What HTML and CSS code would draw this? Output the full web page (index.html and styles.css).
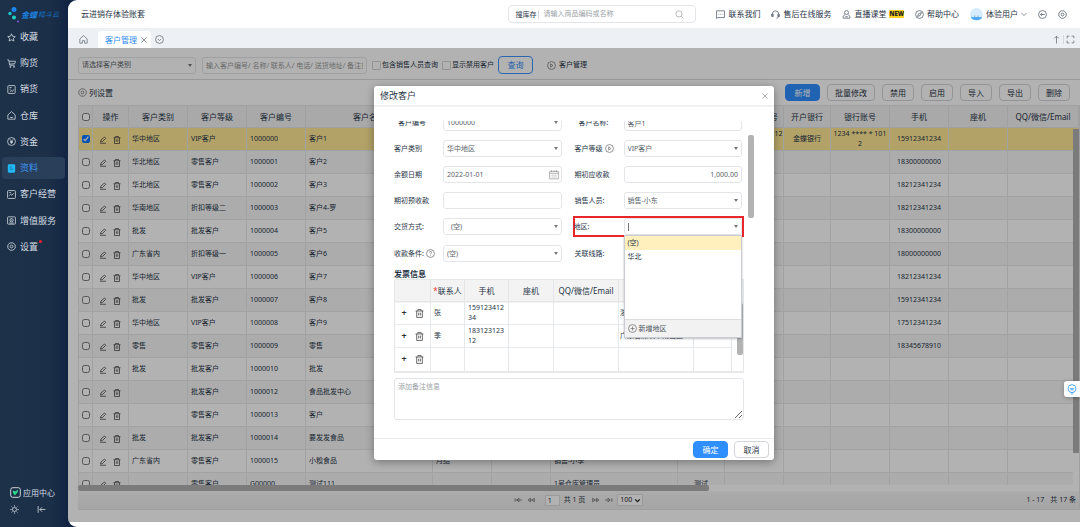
FILE: index.html
```html
<!DOCTYPE html>
<html lang="zh-CN">
<head>
<meta charset="utf-8">
<title>客户管理</title>
<link rel="stylesheet" href="styles.css">
</head>
<body>
<svg class="sprite" aria-hidden="true">
  <symbol id="i-edit" viewBox="0 0 16 16"><path d="M3 12l1-4 7-6 2.500 2.500-6.500 6.500zM2 14.500h12"/></symbol>
  <symbol id="i-trash" viewBox="0 0 16 16"><path d="M1 3.500h14M5 3V1h6v2M3 3.500V15h10V3.500M6.500 6.500v5M9.500 6.500v5"/></symbol>
  <symbol id="i-star" viewBox="0 0 16 16"><path d="M8 1.500l2 4.300 4.700.6-3.400 3.200.9 4.700L8 12l-4.200 2.300.9-4.700L1.300 6.400 6 5.800z"/></symbol>
  <symbol id="i-cart" viewBox="0 0 16 16"><path d="M.5 1.500H3l1.800 9.500h8.700M3.500 4h11.500l-1.500 4.500-9 .5"/><circle cx="6" cy="14" r="1"/><circle cx="12.500" cy="14" r="1"/></symbol>
  <symbol id="i-sale" viewBox="0 0 16 16"><rect x="1.500" y="1" width="13" height="14" rx="1.500"/><path d="M4.500 4.500H8M4.500 7.500h2M5 12l3-2.500 1.500 2L12 8"/></symbol>
  <symbol id="i-house" viewBox="0 0 16 16"><path d="M1.500 7L8 1l6.500 6v7.500h-13zM5.500 11.500h5"/></symbol>
  <symbol id="i-yen" viewBox="0 0 16 16"><circle cx="8" cy="8" r="7"/><path d="M5 4l3 3.500L11 4M8 7.500V12M5.500 8h5M5.500 10h5"/></symbol>
  <symbol id="i-book" viewBox="0 0 16 16"><rect x="1.500" y="0.500" width="13" height="15" rx="2" fill="#20b8f5" stroke="none"/><path d="M5 5.500h4M5 9h6" stroke="#1668a8"/></symbol>
  <symbol id="i-chart" viewBox="0 0 16 16"><rect x="1" y="1" width="14" height="14" rx="1.500"/><path d="M4 10l2.500-2.500L8.500 9 12 6M4 4.500h3"/></symbol>
  <symbol id="i-value" viewBox="0 0 16 16"><rect x="1" y="1.500" width="14" height="13" rx="1.500"/><circle cx="8" cy="7.500" r="3"/><path d="M4 12.500h8M6.500 7.500h3"/></symbol>
  <symbol id="i-gear" viewBox="0 0 16 16"><path d="M5.500 1.500h5L14.500 5v6l-4 3.500h-5l-4-3.500V5z"/><circle cx="8" cy="8" r="2.500"/></symbol>
  <symbol id="i-home" viewBox="0 0 16 16"><path d="M1.500 7L8 1l6.500 6v7.500H10V10H6v4.500H1.500z"/></symbol>
  <symbol id="i-down" viewBox="0 0 16 16"><circle cx="8" cy="8" r="7"/><path d="M5 7l3 3 3-3"/></symbol>
  <symbol id="i-play" viewBox="0 0 16 16"><circle cx="8" cy="8" r="7"/><path d="M6.500 5l4 3-4 3z"/></symbol>
  <symbol id="i-plus" viewBox="0 0 16 16"><circle cx="8" cy="8" r="7"/><path d="M8 4.500v7M4.500 8h7"/></symbol>
  <symbol id="i-help" viewBox="0 0 16 16"><circle cx="8" cy="8" r="7"/><path d="M6 6.200c0-2.600 4-2.600 4 0 0 1.500-2 1.500-2 3.300M8 11v1.200"/></symbol>
  <symbol id="i-chat" viewBox="0 0 16 16"><path d="M1 1.500h14v12H3.500L1 15zM4.500 7.500h1.200M7.400 7.500h1.200M10.300 7.500h1.200"/></symbol>
  <symbol id="i-headset" viewBox="0 0 16 16"><path d="M2.500 11V7a5.500 5.500 0 0 1 11 0v4c0 2.500-2 3.500-4 3.500M2.500 7.500H1v4h3v-4zM13.500 7.500H15v4h-3v-4"/></symbol>
  <symbol id="i-person" viewBox="0 0 16 16"><circle cx="8" cy="4.500" r="3.500"/><path d="M5.500 8L2 11v3.500h12V11l-3.500-3M5.500 12h5"/></symbol>
  <symbol id="i-compass" viewBox="0 0 16 16"><circle cx="8" cy="8" r="7"/><path d="M11.500 4.500l-2 5-5 2 2-5z"/></symbol>
  <symbol id="i-back" viewBox="0 0 16 16"><circle cx="8" cy="8" r="7"/><path d="M12 8H4.500M7 5.500L4.500 8 7 10.500"/></symbol>
</svg>

<div class="app">
  <aside class="side">
    <div class="logo">
      <svg class="logo-mark" viewBox="0 0 12 16"><circle cx="6" cy="2.500" r="2.500" fill="#1a86f0"/><circle cx="2" cy="6.500" r="1.700" fill="#18c5d8"/><circle cx="6" cy="10.500" r="2" fill="#1ed0c0"/><circle cx="10" cy="14.500" r="1" fill="#8a5cf0"/></svg>
      <b>金蝶</b><i>精斗云</i>
    </div>
    <nav class="menu">
      <a href="#"><svg><use href="#i-star"/></svg>收藏</a>
      <a href="#"><svg><use href="#i-cart"/></svg>购货</a>
      <a href="#"><svg><use href="#i-sale"/></svg>销货</a>
      <a href="#"><svg><use href="#i-house"/></svg>仓库</a>
      <a href="#"><svg><use href="#i-yen"/></svg>资金</a>
      <a href="#" class="on"><svg><use href="#i-book"/></svg>资料</a>
      <a href="#"><svg><use href="#i-chart"/></svg>客户经营</a>
      <a href="#"><svg><use href="#i-value"/></svg>增值服务</a>
      <a href="#"><svg><use href="#i-gear"/></svg><span class="dotted">设置</span></a>
    </nav>
    <div class="side-foot">
      <a href="#"><svg class="appic" viewBox="0 0 16 16"><rect x="1" y="1" width="14" height="14" rx="3"/><path d="M4 5l3.500 1 4.500-2-1 4-4 4.500L4.500 9z" fill="#2fd08a" stroke="none"/></svg>应用中心</a>
      <div class="side-tools">
        <button aria-label="主题"><svg viewBox="0 0 16 16"><circle cx="8" cy="8" r="3.500"/><path d="M8 .5V3M8 13v2.500M.5 8H3M13 8h2.500M2.700 2.700l1.700 1.700M11.600 11.600l1.700 1.700M2.700 13.300l1.700-1.700M11.600 4.400l1.700-1.700"/></svg></button>
        <button aria-label="收起"><svg viewBox="0 0 16 16"><path d="M2 2v12M15 8H5M9 4L5 8l4 4"/></svg></button>
      </div>
    </div>
  </aside>

  <div class="main">
    <header class="top">
      <span class="account">云进销存体验账套</span>
      <div class="search">
        <label for="q">搜库存</label>
        <input id="q" placeholder="请输入商品编码或名称">
        <svg viewBox="0 0 16 16"><circle cx="7" cy="7" r="5.500"/><path d="M11 11l4 4"/></svg>
      </div>
      <nav class="links">
        <a href="#"><svg><use href="#i-chat"/></svg>联系我们</a>
        <a href="#"><svg><use href="#i-headset"/></svg>售后在线服务</a>
        <a href="#"><svg><use href="#i-person"/></svg>直播课堂<em>NEW</em></a>
        <a href="#"><svg><use href="#i-compass"/></svg>帮助中心</a>
        <a href="#"><svg class="avatar" viewBox="0 0 24 24"><circle cx="12" cy="12" r="12" fill="#d5ecff"/><path d="M2 19l2-8c4-5 12-5 16 0l2 8c-6 4-14 4-20 0z" fill="#59b2fb"/><path d="M3 11c1-10 17-10 18 0v6H3z" fill="#d9edff"/><path d="M3 17h18l-3 4H6z" fill="#45a6fa"/><path d="M8 15h2M14 15h2" stroke="#2477c8"/></svg>体验用户<svg class="chev" viewBox="0 0 12 12"><path d="M1 4l5 5 5-5"/></svg></a>
        <a href="#" aria-label="返回"><svg><use href="#i-back"/></svg></a>
        <a href="#" aria-label="设置"><svg><use href="#i-gear"/></svg></a>
      </nav>
    </header>

    <div class="tabs">
      <button class="ic" aria-label="首页"><svg><use href="#i-home"/></svg></button>
      <div class="tab">客户管理<button class="ic" aria-label="关闭标签"><svg class="x" viewBox="0 0 12 12"><path d="M1 1l10 10M11 1L1 11"/></svg></button></div>
      <button class="ic" aria-label="更多标签"><svg class="more"><use href="#i-down"/></svg></button>
      <div class="tab-tools">
        <button class="ic" aria-label="上移"><svg viewBox="0 0 12 16"><path d="M6 15V2M2 6l4-4 4 4"/></svg></button>
        <button class="ic full" aria-label="全屏"><svg viewBox="0 0 16 16"><path d="M6 2H2v4M10 2h4v4M6 14H2v-4M10 14h4v-4"/></svg></button>
      </div>
    </div>

    <div class="content">
      <form class="filter">
        <div class="sel cat"><select aria-label="客户类别"><option>请选择客户类别</option></select></div>
        <input class="kw" aria-label="关键字" placeholder="输入客户编号/ 名称/ 联系人/ 电话/ 送货地址/ 备注查询">
        <label><input type="checkbox">包含销售人员查询</label>
        <label><input type="checkbox">显示禁用客户</label>
        <button type="button" class="query">查询</button>
        <a href="#"><svg><use href="#i-play"/></svg>客户管理</a>
      </form>
      <div class="actions">
        <button class="colset"><svg><use href="#i-gear"/></svg>列设置</button>
        <div class="btns">
          <button class="primary">新增</button><button>批量修改</button><button>禁用</button><button>启用</button><button>导入</button><button>导出</button><button>删除</button>
        </div>
      </div>
      <div class="grid-box">
        <div class="grid-view">
          <table class="grid">
            <colgroup><col class="w14"><col class="w36"><col class="w59"><col class="w59"><col class="w59"><col class="w127"><col class="w59"><col class="w59"><col class="w127"><col class="w47"><col class="w59"><col class="w47"><col class="w59"><col class="w59"><col class="w59"><col></colgroup>
            <thead><tr><th><input type="checkbox" aria-label="全选"></th><th>操作</th><th>客户类别</th><th>客户等级</th><th>客户编号</th><th>客户名称</th><th>结算方式</th><th>期初余额</th><th>销售人员</th><th>地区</th><th>纳税人识别号</th><th>开户银行</th><th>银行账号</th><th>手机</th><th>座机</th><th>QQ/微信/Email</th></tr></thead>
            <tbody id="rows"></tbody>
          </table>
          <div class="vbar"></div>
        </div>
        <div class="hbar"><div></div></div>
        <div class="pager">
          <div class="pg">
            <button aria-label="首页"><svg viewBox="0 0 16 10"><path d="M2 2v6M8 5H4M9 2L5 5l4 3zM10 5h4"/></svg></button>
            <button aria-label="上一页"><svg viewBox="0 0 16 10"><path d="M6 2L2 5l4 3zM13 2L9 5l4 3zM6 5h3"/></svg></button>
            <input value="1" aria-label="页码"><span>共 1 页</span>
            <button aria-label="下一页"><svg viewBox="0 0 16 10"><path d="M10 2l4 3-4 3zM3 2l4 3-4 3zM7 5h3"/></svg></button>
            <button aria-label="末页"><svg viewBox="0 0 16 10"><path d="M14 2v6M2 5h4M7 2l4 3-4 3z"/></svg></button>
            <div class="sel size"><select aria-label="每页条数"><option>100</option></select><svg viewBox="0 0 12 12"><path d="M2 4l4 4 4-4"/></svg></div>
          </div>
          <span class="sum"><span>1 - 17</span><span>共 17 条</span></span>
        </div>
      </div>

      <div class="mask">
        <section class="modal" role="dialog" aria-labelledby="mt">
          <header><h2 id="mt">修改客户</h2><button class="ic" aria-label="关闭"><svg viewBox="0 0 12 12"><path d="M2 2l8 8M10 2l-8 8"/></svg></button></header>
          <div class="body">
            <div class="form">
              <label for="f1" class="ind">客户编号</label><div class="sel"><select id="f1"><option>1000000</option></select></div>
              <label for="f2" class="ind">客户名称:</label><input id="f2" value="客户1">
              <label for="f3">客户类别</label><div class="sel"><select id="f3"><option>华中地区</option></select></div>
              <label for="f4">客户等级<svg><use href="#i-play"/></svg></label><div class="sel"><select id="f4"><option>VIP客户</option></select></div>
              <label for="f5">余额日期</label><div class="date"><input id="f5" value="2022-01-01"><svg viewBox="0 0 16 16"><path d="M1 3h14v12H1zM1 6h14M4 1v3M8 1v3M12 1v3M4 9h2M7 9h2M10 9h2M4 12h2M7 12h2M10 12h2"/></svg></div>
              <label for="f6">期初应收款</label><input id="f6" class="num" value="1,000.00">
              <label for="f7">期初预收款</label><input id="f7">
              <label for="f8">销售人员:</label><div class="sel"><select id="f8"><option>销售-小东</option></select></div>
              <label for="f9">交货方式:</label><div class="sel"><select id="f9" class="deep"><option>(空)</option></select></div>
              <div class="region">
                <label for="f10">地区:</label>
                <div class="sel combo"><input id="f10">
                  <div class="drop"><ul><li class="hit">(空)</li><li>华北</li></ul><button><svg><use href="#i-plus"/></svg>新增地区</button></div>
                </div>
              </div>
              <label for="f11">收款条件:<svg><use href="#i-help"/></svg></label><div class="sel"><select id="f11"><option>(空)</option></select></div>
              <label for="f12">关联线路:</label><div class="sel"><select id="f12"><option></option></select></div>
            </div>
            <h3>发票信息</h3>
            <div class="contacts">
              <table>
                <colgroup><col class="w36"><col class="w34"><col class="w44"><col class="w45"><col class="w65"><col class="w75"><col></colgroup>
                <thead><tr><th></th><th><em>*</em>联系人</th><th>手机</th><th>座机</th><th>QQ/微信/Email</th><th>送货地址</th><th></th></tr></thead>
                <tbody>
                  <tr><td class="ops"><b>+</b><svg><use href="#i-trash"/></svg></td><td>张</td><td>15912341234</td><td></td><td></td><td class="one">浙江省杭州市</td><td></td></tr>
                  <tr><td class="ops"><b>+</b><svg><use href="#i-trash"/></svg></td><td>季</td><td>18312312312</td><td></td><td></td><td class="one">广东省深圳市南山区...</td><td></td></tr>
                  <tr><td class="ops"><b>+</b><svg><use href="#i-trash"/></svg></td><td></td><td></td><td></td><td></td><td></td><td></td></tr>
                </tbody>
              </table>
              <div class="cbar"></div>
            </div>
            <textarea aria-label="备注" placeholder="添加备注信息"></textarea>
            <div class="bbar"></div>
          </div>
          <footer><button class="primary">确定</button><button>取消</button></footer>
        </section>
      </div>
    </div>
    <button class="assist" aria-label="助手"><svg viewBox="0 0 16 18"><circle cx="8" cy="7.500" r="6.500"/><path d="M4.500 7.500h7M5.500 9.500h5M5.500 14h5M6.500 16.500h3"/></svg></button>
  </div>
</div>
<script src="app.js"></script>
</body>
</html>
```
FILE: styles.css
```css
* { box-sizing: border-box; }
body { margin: 0; }
body, input, select, button, textarea { font: 7px/10px "Noto Sans", "Noto Sans CJK SC", sans-serif; color: #1f3446; }
button { padding: 0; border: 0; background: none; cursor: pointer; }
a { color: inherit; text-decoration: none; }
svg { width: 9px; height: 9px; fill: none; stroke: currentColor; stroke-width: 1.400; flex: none; display: block; }
.sprite { position: absolute; width: 0; height: 0; }
input, select, textarea { outline: 0; }
::placeholder { color: #9a9fa5; opacity: 1; }
.ic { display: flex; align-items: center; }

.app { display: flex; height: 100vh; overflow: hidden; background: linear-gradient(90deg, #1d3249 0, #1b2f48 50px, #122443 68px); }

/* sidebar */
.side { width: 68px; flex: none; display: flex; flex-direction: column; color: #d5dce3; }
.logo { display: flex; align-items: center; height: 26px; padding: 4px 0 0 8px; gap: 1px; color: #1c82e0; white-space: nowrap; }
.logo-mark { width: 12px; height: 16px; stroke: none; }
.logo b { font-size: 8px; font-style: italic; font-weight: 700; }
.logo i { font-size: 7px; color: #1a72c4; }
.menu { height: 44vh; display: flex; flex-direction: column; justify-content: space-between; padding: 0 3px 0 2px; font-size: 9px; line-height: 12px; }
.menu a { display: flex; align-items: center; gap: 4px; height: 22px; padding-left: 5px; border-radius: 4px; }
.menu .on { background: #2a405a; color: #3a94f4; }
.dotted { position: relative; }
.dotted::after { content: ""; position: absolute; right: -4px; top: -1px; width: 3px; height: 3px; border-radius: 50%; background: #f5222d; }
.side-foot { margin-top: auto; padding: 0 0 13px 10px; font-size: 8px; line-height: 11px; }
.side-foot a { display: flex; align-items: center; gap: 2px; }
.side-foot .appic { width: 11px; height: 11px; }
.side-tools { display: flex; gap: 18px; margin-top: 7px; }
.side-tools button { color: #d5dce3; }

/* top bar */
.main { position: relative; flex: 1; min-width: 0; display: flex; flex-direction: column; background: #fff; border-radius: 9px 0 0 9px; overflow: hidden; padding-bottom: 5px; }
.top { display: flex; align-items: center; height: 28px; padding: 0 13px 0 13px; font-size: 8px; line-height: 12px; flex: none; }
.search { display: flex; align-items: center; width: 188px; height: 18px; margin-left: auto; margin-right: 20px; padding: 0 11px 0 6px; border: 1px solid #e2e4e8; border-radius: 4px; }
.search label { padding-right: 2px; border-right: 1px solid #d5d8dc; font-size: 7px; line-height: 9px; }
.search input { flex: 1; min-width: 0; border: 0; padding: 0 4px; }
.search svg { color: #aaa; }
.links { display: flex; gap: 11px; }
.links a { display: flex; align-items: center; gap: 3px; }
.links em { font: 800 6px/8px "Open Sans", sans-serif; background: #ffd21e; border-radius: 1px; color: #222; }
.links svg { color: #5b6470; }
.links .avatar { width: 13px; height: 13px; stroke: none; }
.links .chev { width: 6px; height: 6px; }

.tabs { display: flex; align-items: center; height: 20px; padding: 3px 5px 0 11px; background: #edf1f6; flex: none; }
.tabs svg { color: #68707b; }
.tab { display: flex; align-items: center; gap: 4px; height: 17px; margin: 0 4px 0 10px; padding: 0 4px 0 7px; border-radius: 4px 4px 0 0; background: #fff; color: #2f8cf6; font-size: 8px; }
.tab .x { width: 6px; height: 6px; }
.tab-tools { display: flex; margin-left: auto; }
.tab-tools .ic { padding-right: 2px; }
.tab-tools .full { border-left: 1px solid #d5d9df; padding: 0 0 0 2px; }

/* filter */
.content { position: relative; flex: 1; min-height: 0; display: flex; flex-direction: column; }
.filter { display: flex; align-items: center; height: 32px; padding: 3px 10px 0; border-bottom: 1px solid #dadada; flex: none; }
.sel { position: relative; display: flex; }
.sel::after { content: ""; position: absolute; right: 4px; top: 7px; border: 2px solid transparent; border-top: 3px solid #777; border-bottom: 0; }
.sel select, .sel input { width: 100%; }
select { appearance: none; }
.sel select, .kw, .form input { height: 17px; padding: 0 3px; border: 1px solid #e3e5e8; border-radius: 3px; background: transparent; color: #5a626a; }
.filter .sel { width: 118px; }
.filter .kw { width: 165px; margin: 0 5px 0 6px; }
.filter ::placeholder { color: #999; }
.filter label { display: flex; align-items: center; gap: 1px; margin-right: 4px; }
.filter label input { appearance: none; width: 9px; height: 9px; margin: 0; border: 1px solid #d4d4d4; border-radius: 1px; }
.query { width: 35px; height: 18px; border: 1px solid #3d94fa; border-radius: 4px; color: #2f8cf6; font-size: 8px; }
.filter a { display: flex; align-items: center; gap: 3px; margin-left: 14px; }
.filter svg, .colset svg, .form label svg, .drop svg { color: #666; stroke-width: 1.200; }

.actions { display: flex; justify-content: space-between; height: 25px; padding: 4px 10px 0; flex: none; }
.colset { display: flex; align-items: center; gap: 2px; height: 17px; font-size: 8px; }
.btns { display: flex; gap: 7px; }
.btns button, footer button { height: 17px; padding: 0 7px; min-width: 32px; border: 1px solid #d2d5d9; border-radius: 4px; font-size: 8px; }
.btns .primary, footer .primary { min-width: 35px; background: #2f8fff; border-color: #2f8fff; color: #fff; }

/* customer table */
.grid-box { flex: 1; min-height: 0; display: flex; flex-direction: column; margin: 0 0 12px 10px; border: 1px solid #e6e6e6; border-width: 1px 1px 1px 0; }
.grid-view { position: relative; flex: 1; min-height: 0; overflow: hidden; border-left: 1px solid #e6e6e6; }
table { width: 100%; table-layout: fixed; border-spacing: 0; }
.grid th, .contacts th { height: 22px; padding: 0; background: #f3f3f3; font-size: 8px; font-weight: 400; white-space: nowrap; border-right: 1px solid #e4e6e8; border-bottom: 1px solid #e4e6e8; }
.grid td { height: 23px; padding: 0 3px; border-right: 1px solid #e6e8ea; border-bottom: 1px solid #e6e8ea; white-space: nowrap; }
.grid tr:nth-child(even) td { background: #f6f6f6; }
.grid tr.picked td { background: #ffe996; }
.grid td:nth-child(1), .grid td:nth-child(n+10) { text-align: center; }
.grid td:first-child, .grid td:nth-child(n+11) { padding: 0; }
.grid input { width: 8px; height: 8px; margin: 0; vertical-align: middle; }
.grid td svg { display: inline-block; vertical-align: middle; margin: 2px 3px 0; width: 8px; height: 10px; color: #333; }
.w14 { width: 14px; } .w34 { width: 34px; } .w36 { width: 36px; } .w44 { width: 44px; } .w45 { width: 45px; } .w47 { width: 47px; } .w59 { width: 59px; } .w65 { width: 65px; } .w75 { width: 75px; } .w127 { width: 127px; }
.vbar { position: absolute; right: 0; top: 23px; bottom: 0; width: 6px; background: linear-gradient(#b0b0b0, #b0b0b0) no-repeat 0 0 / 6px 91%, #fff; }
.hbar { height: 6px; background: #fff; }
.hbar div { width: 63%; height: 6px; border-radius: 2px; background: #b0b0b0; }
.pager { display: flex; align-items: center; justify-content: center; position: relative; height: 18px; background: linear-gradient(#f6f6f6, #ececec); }
.pg { display: flex; align-items: center; gap: 4px; }
.pg svg { width: 9px; height: 6px; color: #666; }
.pg input { width: 15px; height: 11px; border: 1px solid #ddd; background: #fff; padding: 0 2px; margin-left: 5px; }
.pg span { margin-right: 2px; }
.size { align-items: center; width: 26px; }
.size::after { display: none; }
.pager .size select { height: 12px; padding: 0 2px; border: 1px solid #ddd; border-radius: 1px; background: #fff; color: #222; }
.pager .size svg { position: absolute; right: 2px; stroke-width: 2; width: 7px; height: 7px; color: #222; }
.sum { position: absolute; right: 3px; display: flex; gap: 6px; }

/* dialog */
.mask { position: absolute; inset: 0; display: flex; justify-content: center; align-items: flex-start; padding-top: 38px; background: rgba(0, 0, 0, .3); }
.modal { width: 400px; background: #fff; border-radius: 3px; box-shadow: 0 2px 8px rgba(0, 0, 0, .35); }
.modal header { display: flex; align-items: center; justify-content: space-between; height: 21px; padding: 0 5px 0 6px; border-bottom: 2px solid #f1f1f1; }
h2 { margin: 0; font-size: 9px; line-height: 12px; font-weight: 400; }
.modal header svg { width: 8px; height: 8px; color: #999; stroke-width: 1.200; }
.body { position: relative; height: 317px; margin-top: 14px; padding: 0 30px 0 20px; overflow: hidden; }
.form { display: grid; grid-template-columns: 49px 1fr 13px 49px 1fr; row-gap: 9px; margin-top: -7px; padding-right: 2px; }
.form > *:nth-child(4n+3) { grid-column: 4; }
.form label { display: flex; align-items: center; gap: 2px; height: 17px; white-space: nowrap; }
.form .ind { padding-left: 4px; }
.form .sel select, .form input { height: 17px; }
.form input { width: 100%; }
.form .num { text-align: right; }
.form .deep { padding-left: 7px; }
.date { position: relative; }
.date svg { position: absolute; right: 3px; top: 3px; width: 10px; height: 11px; stroke-width: 1; color: #888; }
.form > .region { grid-column: 4 / 6; display: grid; grid-template-columns: 49px 1fr; margin: -2px -2px -1px; border: 2px solid #e8262c; padding: 0; }
.region label { margin-left: -1px; }
.combo { height: 17px; }
.form .combo input { width: 100%; }
.combo::before { content: ""; position: absolute; left: 4px; top: 5px; height: 8px; border-left: 1px solid #777; }
.form > .region ~ *:nth-child(n) { grid-column: auto; }
.form > .region ~ label[for="f12"] { grid-column: 4; }
.drop { position: absolute; z-index: 2; top: 17px; left: 0; right: 0; height: 103px; display: flex; flex-direction: column; justify-content: space-between; background: #fff; border: 1px solid #c9ccd0; box-shadow: 0 1px 2px rgba(0, 0, 0, .25); }
.drop ul { list-style: none; margin: 0; padding: 0; }
.drop li { padding: 2px 3px; line-height: 10px; }
.drop .hit { background: #fff0bd; }
.drop button { display: flex; align-items: center; gap: 2px; height: 18px; padding-left: 3px; background: #f2f2f2; border-top: 1px solid #ddd; color: #4d565f; }
h3 { margin: 6px 0 0; font-size: 8px; line-height: 11px; font-weight: 700; }
.contacts { position: relative; border: 1px solid #e4e6e8; border-bottom: 2px solid #e8e8e8; background: linear-gradient(#f3f3f3 23px, #fff 23px); border-radius: 2px 2px 0 0; }
.contacts table { width: calc(100% - 11px); }
.contacts td { height: 23px; padding: 0 3px; border-right: 1px solid #e6e9ec; border-bottom: 1px solid #e6e9ec; overflow-wrap: anywhere; }
.contacts tr:last-child td { border-bottom: 0; }
.contacts em { color: #f33; font-style: normal; }
.contacts .one { white-space: nowrap; overflow: hidden; padding: 0 1px; }
.contacts .ops { text-align: center; white-space: nowrap; }
.ops b { font-size: 9px; color: #333; vertical-align: middle; }
.ops svg { display: inline-block; vertical-align: middle; margin-left: 8px; width: 9px; height: 9px; color: #444; }
.cbar { position: absolute; right: 0; top: 23px; width: 6px; height: 52px; border-radius: 2px; background: #b3b3b3; }
.bbar { position: absolute; right: 20px; top: 14px; width: 6px; height: 83px; border-radius: 2px; background: #b3b3b3; }
textarea { display: block; width: 100%; height: 42px; margin-top: 5px; padding: 3px; border: 1px solid #e3e5e8; border-radius: 3px; }
footer { display: flex; justify-content: flex-end; gap: 6px; padding: 2px 5px; border-top: 1px solid #e9e9e9; }
footer button { min-width: 35px; }
.assist { position: absolute; right: 0; top: 381px; width: 16px; height: 16px; display: flex; align-items: center; justify-content: center; background: #fff; border-radius: 3px 0 0 3px; color: #3f9bfb; box-shadow: 0 1px 4px rgba(0, 0, 0, .25); }
.assist svg { width: 10px; height: 11px; }
```
FILE: app.js
```js
// class, level, code, name, mobile, then any extra cells by column index
const customers = [
  ["华中地区", "VIP客户", "1000000", "客户1", "15912341234", { 10: "9144 **** * 1012<br>34", 11: "金蝶银行", 12: "1234 **** * 101<br>2" }],
  ["华北地区", "零售客户", "1000001", "客户2", "18300000000"],
  ["华北地区", "零售客户", "1000002", "客户3", "18212341234"],
  ["华南地区", "折扣等级二", "1000003", "客户4-罗", "18212341234"],
  ["批发", "批发客户", "1000004", "客户5", "18300000000"],
  ["广东省内", "折扣等级一", "1000005", "客户6", "18000000000"],
  ["华中地区", "VIP客户", "1000006", "客户7", "18212341234"],
  ["批发", "批发客户", "1000007", "客户8", "15912341234"],
  ["华中地区", "VIP客户", "1000008", "客户9", "17512341234"],
  ["零售", "零售客户", "1000009", "零售", "18345678910"],
  ["批发", "批发客户", "1000010", "批发", ""],
  ["", "批发客户", "1000012", "食品批发中心", ""],
  ["", "零售客户", "1000013", "客户", ""],
  ["批发", "批发客户", "1000014", "要发发食品", ""],
  ["广东省内", "零售客户", "1000015", "小糗食品", "", { 6: "月结", 8: "销售-小季" }],
  ["", "零售客户", "G00000", "测试111", "", { 8: "1号仓库管理员", 9: "测试" }]
];

document.getElementById("rows").innerHTML = customers.map((c, i) => {
  const cells = Array(16).fill("");
  cells[0] = `<input type="checkbox" aria-label="选择 ${c[2]}"${i === 0 ? " checked" : ""}>`;
  cells[1] = '<svg><use href="#i-edit"/></svg><svg><use href="#i-trash"/></svg>';
  [cells[2], cells[3], cells[4], cells[5], cells[13]] = c;
  Object.assign(cells, c[5] || {});
  return `<tr${i === 0 ? ' class="picked"' : ""}>${cells.map(x => `<td>${x}</td>`).join("")}</tr>`;
}).join("");
```
